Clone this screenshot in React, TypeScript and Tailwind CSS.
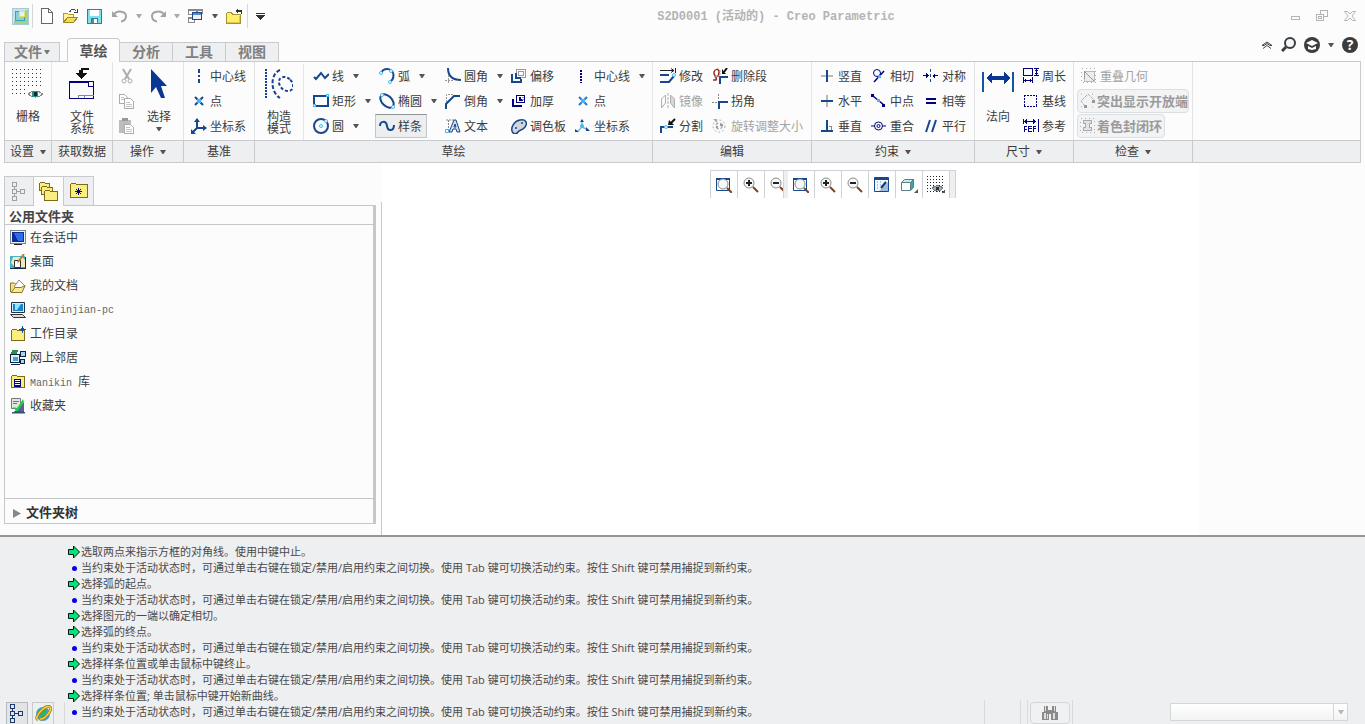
import type { ReactNode } from "react";

const BLUE = "#17478c";
const NAVY = "#000080";
const SKY = "#45b8ea";
const GREY = "#adadad";

type IconProps = { children: ReactNode; w?: number; h?: number; smooth?: boolean };

function Svg({ children, w = 16, h = 16, smooth = false }: IconProps) {
  return (
    <svg
      width={w}
      height={h}
      viewBox={`0 0 ${w} ${h}`}
      fill="none"
      className="shrink-0"
      aria-hidden="true"
      shapeRendering={smooth ? "auto" : "crispEdges"}
    >
      {children}
    </svg>
  );
}

function Caret({ color = "#555" }: { color?: string }) {
  return (
    <Svg w={6} h={4} smooth>
      <path d="M0 0h6L3.500 4h-1z" fill={color} />
    </Svg>
  );
}

/* ---------- quick access icons ---------- */

const AppIcon = () => (
  <Svg w={17} h={17}>
    <rect x="0.5" y="0.5" width="16" height="16" fill="#c9e3ee" stroke="#a9c9d8" />
    <path d="M2 13h14v3H2zM13 2h3v14h-3z" fill="#a4d08a" />
    <path d="M3 3h10v10H3z" fill="#3aa3b8" />
    <path d="M4 4h3v5h5v3H4z" fill="#8ed0d8" />
    <path d="M7 3h6v6H7z" fill="#dfe65c" />
    <path d="M8 4h4v4H8z" fill="#e4f4ee" />
  </Svg>
);

const NewIcon = () => (
  <Svg w={14} h={16}>
    <path d="M1.500 0.500h7l4 4v11h-11z" fill="#fff" stroke="#666" />
    <path d="M8.500 0.500v4h4" stroke="#666" />
  </Svg>
);

const OpenIcon = () => (
  <Svg w={17} h={16}>
    <path d="M1.500 13.500v-8h4l1 1h5v3" fill="#fff3a0" stroke="#b09a2c" />
    <path d="M1.500 14.500l4-5h10l-4 5z" fill="#f0dc5a" stroke="#a08a20" />
    <path d="M7.500 4.500c1-4 5-4 7-1M15.500 1v4M12 4.500h4" stroke="#444" />
  </Svg>
);

const SaveIcon = () => (
  <Svg w={15} h={15}>
    <rect x="0.5" y="0.5" width="14" height="14" fill="#7fe0ea" stroke="#2f7f96" />
    <rect x="3" y="1" width="9" height="6" fill="#fff" />
    <rect x="4.5" y="9.5" width="6" height="5" fill="#fff" stroke="#2f7f96" />
    <path d="M5 10h2v4H5z" fill="#5c8a94" />
  </Svg>
);

const UndoIcon = () => (
  <Svg w={16} h={14} smooth>
    <path d="M2 5.500C5 1 14 2 14 7c0 3-2 5-5 5.500" stroke="#a3a3a3" strokeWidth="2" />
    <path d="M0 2v6h6z" fill="#a3a3a3" />
  </Svg>
);

const RedoIcon = () => (
  <Svg w={16} h={14} smooth>
    <path d="M14 5.500C11 1 2 2 2 7c0 3 2 5 5 5.500" stroke="#a3a3a3" strokeWidth="2" />
    <path d="M16 2v6h-6z" fill="#a3a3a3" />
  </Svg>
);

const WindowsIcon = () => (
  <Svg w={16} h={15}>
    <path d="M0.500 0.500h8v5h-8zM0.500 8.500h6v5h-6zM9.500 0.500h5v4h-5z" stroke="#888" />
    <path d="M0 1h9v1H0zM0 9h6v1H0zM9 1h6v1H9z" fill="#888" />
    <rect x="4.500" y="3.500" width="9" height="7" fill="#eef3fc" stroke="#1d4795" />
    <path d="M5 4h8v2H5z" fill="#5d86cc" />
  </Svg>
);

const CloseFolderIcon = () => (
  <Svg w={17} h={17}>
    <path d="M0.500 15.500v-10l1-1h4l1 2h8v9z" fill="#fff06c" stroke="#a8922a" />
    <path d="M1 14h13v1H1zM13 8h1v7h-1z" fill="#e3c640" />
    <path d="M9 3l3-3v2h3l1 1v3h-1V4h-3v2z" fill="#333" />
  </Svg>
);

const CustomizeIcon = () => (
  <Svg w={9} h={7}>
    <path d="M0 0h9v1H0zM0 2h9v1H0zM1 3h7v1H1zM2 4h5v1H2zM3 5h3v1H3zM4 6h1v1H4z" fill="#333" />
  </Svg>
);

/* ---------- big ribbon icons ---------- */

const GridEyeIcon = () => {
  const dots: ReactNode[] = [];
  for (let y = 0; y < 7; y++)
    for (let x = 0; x < 8; x++)
      if (!(y > 4 && x > 3)) dots.push(<rect key={`${x}-${y}`} x={x * 4} y={y * 4 + 1} width="1" height="1" fill="#333" />);
  return (
    <Svg w={32} h={32}>
      {dots}
      <path d="M16 26c4-4 10-4 15 0c-4 4-11 4-15 0z" fill="#e8f2f2" stroke="#8a8a8a" />
      <circle cx="23" cy="26" r="3.500" fill="#2f8f8f" />
      <rect x="22" y="24" width="3" height="4" fill="#06302f" />
    </Svg>
  );
};

const FileSystemIcon = () => (
  <Svg w={26} h={33}>
    <path d="M12 1h8v2h-6v3h4l-6 6-6-6h4V3h2z" fill="#111" />
    <path d="M1 14h24v17H1z" fill="#fafafc" />
    <path d="M0.500 14.500h24v17h-24z" stroke={NAVY} />
    <path d="M1 15h19v1H1z" fill={NAVY} />
    <path d="M19.500 15v4h5" stroke={NAVY} />
    <path d="M9.500 31v-3h15M15.500 28v3" stroke="#888" />
  </Svg>
);

const PointerIcon = () => (
  <Svg w={18} h={30} smooth>
    <path d="M1 0v24l5-6 5 11h4l-4-12h6z" fill="#0a3794" />
  </Svg>
);

const ConstructionIcon = () => (
  <Svg w={28} h={32} smooth>
    <path d="M1 1v30" stroke="#1a3f96" strokeWidth="2" strokeDasharray="2 1" />
    <path d="M15 2C5 6 5 24 15 30" stroke="#1a3f96" strokeWidth="2" strokeDasharray="4 2" />
    <ellipse cx="21" cy="16" rx="6" ry="8" transform="rotate(-45 21 16)" stroke="#1a3f96" strokeWidth="2" strokeDasharray="3 2" />
  </Svg>
);

const NormalIcon = () => (
  <Svg w={32} h={28}>
    <path d="M0 2h2v20H0zM30 2h2v20h-2z" fill="#1454a4" />
    <path d="M4 8l6-6v4h12V2l6 6-6 6v-4H10v4z" fill="#0a3794" />
  </Svg>
);

/* ---------- small ribbon icons ---------- */

const CutIcon = () => (
  <Svg smooth>
    <path d="M4 1l6 10M12 1L6 11" stroke={GREY} strokeWidth="2" />
    <circle cx="5" cy="13" r="2" stroke={GREY} />
    <circle cx="11" cy="13" r="2" stroke={GREY} />
  </Svg>
);

const CopyIcon = () => (
  <Svg>
    <path d="M0.500 1.500h5l3 3v6h-8z" fill="#fff" stroke={GREY} />
    <path d="M5.500 5.500h6l3 3v7h-9z" fill="#fff" stroke={GREY} />
    <path d="M7 9.500h4M7 11.500h6M7 13.500h6M2 4.500h3M2 6.500h3" stroke="#c4c4c4" />
  </Svg>
);

const PasteIcon = () => (
  <Svg>
    <path d="M0 2h12v13H0z" fill="#bdbdbd" />
    <path d="M3 0h6v3H3z" fill="#999" />
    <path d="M5.500 6.500h6l3 3v6h-9z" fill="#fff" stroke={GREY} />
    <path d="M7 9.500h4M7 11.500h6M7 13.500h6" stroke="#c4c4c4" />
  </Svg>
);

const CenterlineIcon = () => (
  <Svg>
    <path d="M7 1h2v4H7zM7 7h2v2H7zM7 11h2v4H7z" fill={BLUE} />
  </Svg>
);

const DottedLineIcon = () => (
  <Svg>
    <path d="M5 2h2v2H5zM5 5h2v2H5zM5 8h2v2H5zM5 11h2v2H5zM5 14h2v1H5z" fill={NAVY} />
  </Svg>
);

const PointIcon = ({ color = BLUE }: { color?: string }) => (
  <Svg smooth>
    <path d="M4 4l8 8M12 4l-8 8" stroke={color} strokeWidth="2" />
    <rect x="6" y="6" width="4" height="4" fill={SKY} />
  </Svg>
);

const CsysIcon = () => (
  <Svg smooth>
    <path d="M6 10V1M6 10h9M6 10l-5 5" stroke={BLUE} strokeWidth="2" />
    <path d="M3 4l3-4 3 4zM12 7l4 3-4 3zM0 11v5h5z" fill={BLUE} />
  </Svg>
);

const SketchCsysIcon = () => (
  <Svg smooth>
    <path d="M7 9V2M7 9l6 3M7 9l-5 5" stroke="#7fb6e8" strokeWidth="1.500" />
    <path d="M5 4l2-3 2 3zM11 9l4 4h-4zM0 11l4 3H0z" fill={BLUE} />
    <circle cx="7" cy="8" r="2" fill={SKY} />
  </Svg>
);

const LineIcon = () => (
  <Svg smooth>
    <path d="M1 9l2 2 5-6 4 5 4-4" stroke={BLUE} strokeWidth="2" />
  </Svg>
);

const RectIcon = () => (
  <Svg>
    <rect x="1" y="3" width="14" height="10" stroke={BLUE} strokeWidth="2" />
    <path d="M13.500 1.500h2v2h-2zM0.500 11.500h2v2h-2z" fill="#fff" stroke={SKY} />
  </Svg>
);

const CircleIcon = () => (
  <Svg smooth>
    <circle cx="8" cy="8" r="7" stroke={BLUE} strokeWidth="2" />
    <circle cx="8" cy="8" r="1.500" stroke={SKY} />
    <circle cx="13" cy="3" r="1.500" fill="#fff" stroke={SKY} />
  </Svg>
);

const ArcIcon = () => (
  <Svg smooth>
    <path d="M2 5C5-1 14 0 14.500 7c0 4-2 6-4 7" stroke={BLUE} strokeWidth="2" />
    <circle cx="2" cy="5" r="1.500" fill="#fff" stroke={SKY} />
    <circle cx="12" cy="3" r="1.500" fill="#fff" stroke={SKY} />
    <circle cx="11" cy="14" r="1.500" fill="#fff" stroke={SKY} />
  </Svg>
);

const EllipseIcon = () => (
  <Svg smooth>
    <ellipse cx="8" cy="8" rx="8" ry="5" transform="rotate(45 8 8)" stroke={BLUE} strokeWidth="2" />
    <circle cx="3" cy="2" r="1.500" fill="#fff" stroke={SKY} />
    <circle cx="14" cy="14" r="1.500" fill="#fff" stroke={SKY} />
  </Svg>
);

const SplineIcon = () => (
  <Svg smooth>
    <path d="M1 8c0-5 6-6 7 0s7 5 7-1" stroke={BLUE} strokeWidth="2" />
  </Svg>
);

const FilletIcon = () => (
  <Svg smooth>
    <path d="M3 0c0 8 4 12 13 12" stroke={BLUE} strokeWidth="2" />
    <path d="M3.500 7v9M0 12.500h8" stroke="#999" strokeDasharray="2 1" />
  </Svg>
);

const ChamferIcon = () => (
  <Svg smooth>
    <path d="M1 16v-5l8-8h6" stroke={BLUE} strokeWidth="2" />
    <path d="M1.500 9V1.500H9" stroke="#999" strokeDasharray="2 1" />
  </Svg>
);

const TextIcon = () => (
  <Svg smooth>
    <path d="M1 2h8M3.500 2v10" stroke="#888" strokeDasharray="2 1" />
    <path d="M4 14l5-12h2l4 12h-3l-1-3H8l-1 3z" fill="#cfdcec" stroke={BLUE} />
    <path d="M9 9l1-3 1 3z" fill="#fff" stroke={BLUE} />
    <path d="M0.500 11.500h3v3h-3z" stroke={SKY} />
  </Svg>
);

const OffsetIcon = () => (
  <Svg>
    <path d="M5.500 1.500h9v8h-9z" stroke="#999" />
    <path d="M7.500 3.500h5v4h-5z" stroke="#999" />
    <path d="M1 6v8h9v-3" stroke={BLUE} strokeWidth="2" />
    <path d="M5 5v5h5" stroke={BLUE} strokeWidth="2" />
  </Svg>
);

const ThickenIcon = () => (
  <Svg>
    <path d="M5.500 2.500h8v7h-8z" stroke={NAVY} />
    <path d="M2 6v7h9" stroke={NAVY} strokeWidth="2" />
    <path d="M8 4h2v2h2v2H8z" fill={NAVY} />
    <path d="M11 4h2M11 6h2" stroke="#999" />
  </Svg>
);

const PaletteIcon = () => (
  <Svg smooth>
    <path d="M1 13c-1-4 2-10 8-11s8 3 5 7-5 2-7 5-5 2-6-1z" fill="#d3d6d8" stroke={BLUE} strokeWidth="1.500" />
    <circle cx="11" cy="5" r="1" fill={BLUE} />
    <circle cx="5" cy="10" r="1" fill={BLUE} />
  </Svg>
);

const ModifyIcon = () => (
  <Svg smooth>
    <path d="M0 2.500h14M11 0.500l3 2-3 2M15.500 0v5" stroke="#222" />
    <path d="M0 7h9M0 14h9l5-6" stroke={BLUE} strokeWidth="2" />
    <circle cx="14" cy="7" r="1.500" fill="#fff" stroke={SKY} />
  </Svg>
);

const MirrorIcon = () => (
  <Svg smooth>
    <path d="M1.500 6l4-4v8l-4 5z" stroke={GREY} />
    <path d="M14.500 6l-4-4v8l4 5z" fill="#d8d8d8" stroke={GREY} />
    <path d="M8 0v16" stroke={GREY} strokeDasharray="3 1" />
  </Svg>
);

const DivideIcon = () => (
  <Svg smooth>
    <path d="M1 15V9h12" stroke={BLUE} strokeWidth="2" />
    <path d="M15 1l-4 4" stroke="#111" strokeWidth="2" />
    <path d="M9 2l5 5H8z" fill="#111" />
    <circle cx="6" cy="9" r="1.500" fill="#fff" stroke={SKY} />
  </Svg>
);

const DeleteSegIcon = () => (
  <Svg smooth>
    <path d="M1 12h3c2-2-3-5-2-8 1-3 5-4 5 0 0 2-1 3-1 5" stroke="#9c2a20" strokeWidth="1.500" />
    <path d="M8 16V9h8" stroke={BLUE} strokeWidth="2" />
    <path d="M15 0l-3 4" stroke="#111" strokeWidth="2" />
    <path d="M10 1l4 5h-4z" fill="#111" />
    <path d="M8 2v6H3" stroke="#999" strokeDasharray="2 1" />
  </Svg>
);

const CornerIcon = () => (
  <Svg>
    <path d="M7 16V9h9" stroke={BLUE} strokeWidth="2" />
    <path d="M6 1h1v2H6zM6 4h1v2H6zM0 9h2v1H0zM3 9h2v1H3z" fill="#888" />
  </Svg>
);

const RotateIcon = () => (
  <Svg smooth>
    <circle cx="7" cy="8" r="6" stroke={GREY} strokeDasharray="2 2" />
    <circle cx="7" cy="8" r="3" stroke={GREY} strokeWidth="1.500" strokeDasharray="3 2" />
    <path d="M1 1h4v4z" fill={GREY} />
    <path d="M8 6h3v2H8zM4 8h2v2H4z" fill="#999" />
  </Svg>
);

const VerticalIcon = () => (
  <Svg>
    <path d="M2 7h12v2H2z" fill="#b8b8b8" />
    <path d="M7 2h2v12H7z" fill={BLUE} />
  </Svg>
);

const HorizontalIcon = () => (
  <Svg>
    <path d="M7 2h2v12H7z" fill="#b8b8b8" />
    <path d="M2 7h12v2H2z" fill={BLUE} />
  </Svg>
);

const PerpIcon = () => (
  <Svg>
    <path d="M7 2h2v10h5v2H2v-2h5z" fill={BLUE} />
    <path d="M9.500 8.500h3v3" stroke="#888" />
  </Svg>
);

const TangentIcon = () => (
  <Svg smooth>
    <circle cx="6" cy="5" r="3.500" stroke={NAVY} />
    <path d="M3 14L13 3" stroke={NAVY} strokeWidth="1.500" />
    <rect x="7" y="7" width="3" height="3" fill={SKY} />
  </Svg>
);

const MidpointIcon = () => (
  <Svg smooth>
    <path d="M2 3l11 9" stroke={NAVY} strokeWidth="1.500" />
    <path d="M0 1h3v3H0zM11 11h3v3h-3z" fill={NAVY} />
    <rect x="6" y="6" width="3" height="3" fill={SKY} />
  </Svg>
);

const CoincidentIcon = () => (
  <Svg smooth>
    <path d="M0 8h3M12 8h3" stroke={NAVY} />
    <circle cx="7.500" cy="8" r="4" stroke={NAVY} />
    <circle cx="7.500" cy="8" r="1.500" stroke={NAVY} />
  </Svg>
);

const SymmetricIcon = () => (
  <Svg>
    <path d="M7 1h1v3H7zM7 6h1v3H7zM7 11h1v3H7z" fill={BLUE} />
    <path d="M0 7h5v1H0zM10 7h5v1h-5z" fill={NAVY} />
    <path d="M3 5l3 3-3 2zM12 5L9 8l3 2z" fill={NAVY} />
  </Svg>
);

const EqualIcon = () => (
  <Svg>
    <path d="M3 5h10v2H3zM3 9h10v2H3z" fill={NAVY} />
  </Svg>
);

const ParallelIcon = () => (
  <Svg smooth>
    <path d="M3 14L7 2M9 14l4-12" stroke={BLUE} strokeWidth="2" />
  </Svg>
);

const PerimeterIcon = () => (
  <Svg>
    <rect x="0.500" y="0.500" width="9" height="7" stroke={NAVY} />
    <path d="M0 9h1v6H0zM9 9h1v6H9zM1 12h8v1H1zM2 11h1v3H2zM7 11h1v3H7zM11 0h5v1h-5zM11 7h5v1h-5zM13 1h1v6h-1zM12 2h3v1h-3zM12 5h3v1h-3z" fill={NAVY} />
  </Svg>
);

const BaselineIcon = () => (
  <Svg>
    <path d="M1 2h13M1 13.500h13" stroke={NAVY} strokeDasharray="2 1" />
    <path d="M1.500 2v11M13.500 2v11" stroke={NAVY} strokeDasharray="2 1" />
  </Svg>
);

const ReferenceIcon = () => (
  <Svg>
    <path d="M1 3h12v1H1zM3 1h1v5H3zM2 2h1v3H2zM10 1h1v5h-1zM11 2h1v3h-1zM15 1h1v13h-1zM0 1h1v5H0z" fill={NAVY} />
    <path d="M1 8h3v1H2v2h2v1H2v2H1zM5 8h4v1H6v1h3v1H6v2h3v1H5zM10 8h3v1h-2v1h2v1h-2v3h-1z" fill={NAVY} />
  </Svg>
);

const OverlapIcon = () => (
  <Svg>
    <path d="M0.500 0.500h14v14h-14z" stroke={GREY} strokeDasharray="1 3" />
    <path d="M3.500 3.500h10v10h-10z" fill="#ececec" stroke="#bbb" />
    <path d="M3 3l10 10M3 3v8" stroke="#999" />
  </Svg>
);

const OpenEndsIcon = () => (
  <Svg smooth>
    <path d="M5 13L1 8l7-7 6 6" stroke="#aaa" strokeDasharray="3 1" />
    <path d="M12 7h3v3h-3zM4 12h3v3H4z" fill="#999" />
    <path d="M1 1h1M12 1h1M1 14h1M12 14h1" stroke={GREY} />
  </Svg>
);

const ShadeLoopsIcon = () => (
  <Svg>
    <path d="M0.500 0.500h14v14h-14z" stroke={GREY} strokeDasharray="1 3" />
    <path d="M3.500 2.500h8v3h-2v4h2v3h-8v-3h2v-4h-2z" fill="#e2e2e2" stroke="#aaa" />
  </Svg>
);

/* ---------- canvas toolbar ---------- */

const Lens = ({ x = 7, y = 7, sign }: { x?: number; y?: number; sign?: "plus" | "minus" }) => (
  <>
    <path d={`M${x + 4} ${y + 4}l5 5`} stroke="#7a4326" strokeWidth="2" />
    <circle cx={x} cy={y} r="5" fill="#f6f8f9" stroke="#8a8a8a" />
    {sign && <path d={`M${x - 3} ${y}h6`} stroke="#222" strokeWidth="2" />}
    {sign === "plus" && <path d={`M${x} ${y - 3}v6`} stroke="#222" strokeWidth="2" />}
  </>
);

const RefitIcon = () => (
  <Svg w={17} smooth>
    <path d="M1.500 1.500h13v12h-13z" fill="#fff" stroke={BLUE} />
    <path d="M1 1h14v2H1z" fill={BLUE} />
    <Lens x={8} y={7} />
  </Svg>
);
const ZoomInIcon = () => (
  <Svg w={17} h={17} smooth>
    <Lens sign="plus" />
  </Svg>
);
const ZoomOutIcon = () => (
  <Svg w={17} h={17} smooth>
    <Lens sign="minus" />
  </Svg>
);
const RepaintIcon = () => (
  <Svg w={15} h={15} smooth>
    <path d="M0.500 0.500h14v14h-14z" fill="#eff6fd" stroke={BLUE} />
    <path d="M1 1h13v2H1z" fill={BLUE} />
    <path d="M14 5v9H5z" fill="#9dbce0" />
    <path d="M12 5l-5 6" stroke="#16335f" strokeWidth="2" />
    <path d="M3 5h1M6 5h1M3 8h1M3 11h1M6 8h1" stroke="#6d8fbc" />
  </Svg>
);
const BoxIcon = () => (
  <Svg w={18} smooth>
    <path d="M1.500 5.500l3-3h9l-3 3z" fill="#b9efec" stroke="#5a7f86" />
    <path d="M10.500 5.500l3-3v8l-3 3z" fill="#3fa4a4" stroke="#5a7f86" />
    <path d="M1.500 5.500h9v8h-9z" fill="#fff" stroke="#5a7f86" />
    <path d="M18 12v4h-4z" fill="#555" />
  </Svg>
);
const DisplayFilterIcon = () => (
  <Svg w={18} h={17}>
    {[0, 3, 6, 9, 12, 15].map((y) => (
      <path key={y} d={`M0 ${y + 0.5}h16`} stroke="#222" strokeDasharray="1 2" />
    ))}
    <path d="M5 12c3-3 8-3 11 0-3 4-8 4-11 0z" fill="#9db2bd" stroke="#777" />
    <rect x="9" y="11" width="3" height="3" fill="#234" />
    <path d="M18 13v4h-4z" fill="#555" />
  </Svg>
);

/* ---------- navigator icons ---------- */

const TreeIcon = ({ color = "#a0a0a0" }: { color?: string }) => (
  <Svg w={14} h={19}>
    <path d="M0.500 0.500h4v4h-4zM0.500 7.500h4v4h-4zM0.500 14.500h4v4h-4zM8.500 7.500h4v4h-4zM2.500 5v2M2.500 12v2M5 9.500h3" stroke={color} />
  </Svg>
);

const Folder = ({ x = 0, y = 0, w = 12, h = 9 }: { x?: number; y?: number; w?: number; h?: number }) => (
  <path d={`M${x + 0.5} ${y + h + 0.5}v-${h - 1}l1-1h4l1 1h${w - 6}v${h - 1}z`} fill="#fbee80" stroke="#7d6b16" />
);

const FoldersIcon = () => (
  <Svg w={20} h={20}>
    <Folder w={10} h={8} />
    <Folder x={2} y={4} w={11} h={8} />
    <Folder x={5} y={8} w={13} h={10} />
  </Svg>
);

const FavFolderIcon = () => (
  <Svg w={18} h={16}>
    <Folder w={17} h={14} />
    <path d="M8 5h1v7H8zM5 8h7v1H5zM6 6h1v1H6zM10 6h1v1h-1zM6 10h1v1H6zM10 10h1v1h-1zM7 7h3v3H7z" fill={NAVY} />
  </Svg>
);

const SessionIcon = () => (
  <Svg>
    <rect x="0.500" y="0.500" width="15" height="13" fill="#eef1f5" stroke="#7a8290" />
    <path d="M2 2h12v10H2z" fill="#0c2c9c" />
    <path d="M4 3h9v8H8z" fill="#2a6ee8" />
    <path d="M4 14h8v1H4z" fill="#223" />
  </Svg>
);
const DesktopIcon = () => (
  <Svg smooth>
    <path d="M0 2h15v12H0z" fill="#3fb4cc" />
    <path d="M3 3h9l3 3v7H5l-4-4z" fill="#efe9bc" />
    <path d="M4.500 6.500h6v7h-6z" fill="#fff" stroke="#333" />
    <path d="M14 0L8 8" stroke="#c07a2a" strokeWidth="2" />
    <path d="M8 8l1-1-2 3z" fill="#111" />
    <path d="M0 14h16v1H0zM15 3h1v11h-1z" fill="#1a2a44" />
  </Svg>
);
const DocsIcon = () => (
  <Svg smooth>
    <path d="M0.500 14V5h4l1 1h3" fill="#f6e27a" stroke="#8a7725" />
    <path d="M4 9l5-7 6 6-3 5z" fill="#fff" stroke="#888" />
    <path d="M1 14.500l4-5h6l4-2-3 7z" fill="#f8ea94" stroke="#8a7725" />
  </Svg>
);
const PcIcon = () => (
  <Svg smooth>
    <path d="M1.500 0.500h13v10h-13z" fill="#dbe8ee" stroke="#234" />
    <path d="M3 2h10v7H3z" fill="#1b84cc" />
    <path d="M5 2h6l-4 6H5z" fill="#8fe4ff" />
    <path d="M0.500 12.500h12l3 3h-12z" fill="#ddd" stroke="#333" />
  </Svg>
);
const WorkDirIcon = () => (
  <Svg>
    <Folder x={1} y={3} w={13} h={11} />
    <path d="M12 0h1v7h-1zM9 3h7v1H9zM11 2h3v3h-3z" fill="#1450b0" />
  </Svg>
);
const NetworkIcon = () => (
  <Svg>
    <path d="M0.500 4.500h9v8h-9z" fill="#e6eef2" stroke="#124" />
    <path d="M3 7h5v4H3z" fill="#35a8e0" />
    <path d="M10.500 1.500h5v5h-5zM10.500 9.500h4v4h-4z" fill="#a9d4f0" stroke="#124" />
    <path d="M2 0h6v2H7v2H1V2h1z" fill="#249048" />
    <path d="M1 14h9v1H1z" fill="#124" />
  </Svg>
);
const ManikinIcon = () => (
  <Svg>
    <Folder x={1} y={1} w={13} h={12} />
    <path d="M4 5h7v8H4z" fill={NAVY} />
    <path d="M5 6h5v1H5zM5 8h5v1H5zM5 10h5v1H5z" fill="#fff" />
  </Svg>
);
const FavoritesIcon = () => (
  <Svg smooth>
    <path d="M1.500 0.500h9v10h-9z" fill="#e4e4e4" stroke="#777" />
    <path d="M3 3.500h6M3 5.500h4" stroke="#777" />
    <path d="M14 4v10H4z" fill="#5c5c98" />
    <path d="M3 9l4 1 6-9 1 3-7 10z" fill="#20d048" />
    <path d="M2 15l3-1h9l1 1z" fill="#246" stroke="#357" />
  </Svg>
);

const GreenArrow = () => (
  <Svg w={12} h={14} smooth>
    <path d="M0.500 4.500h5V1l6 6-6 6V9.500h-5z" fill="#00e676" stroke="#111" />
  </Svg>
);

const BrowserIcon = () => (
  <Svg w={17} h={17} smooth>
    <circle cx="8" cy="9" r="7" fill="#35a6d6" />
    <path d="M3 6c3-4 8-2 9 0l-3 3 2 4-4 2-1-4-4-1z" fill="#3cae58" />
    <path d="M3 15C-2 12 11-1 15 2c3 3-6 13-10 12" stroke="#a07a18" strokeWidth="3" />
    <path d="M3 15C-2 12 11-1 15 2c3 3-6 13-10 12" stroke="#f2d43c" strokeWidth="1.500" />
  </Svg>
);

const BinocularsIcon = () => (
  <Svg w={16}>
    <path d="M2 1h4v4h1v10H0V7h2zM10 1h4v6h2v8H9V5h1zM7 5h2v4H7z" fill="#8a8a8a" />
    <path d="M2 8h2v6H2zM11 8h2v6h-2zM3 1h1v5H3zM12 1h1v5h-1zM5 9h1v5H5z" fill="#dedede" />
  </Svg>
);

/* ---------- ribbon building blocks ---------- */

type ToolProps = {
  icon: ReactNode;
  label: string;
  caret?: boolean;
  active?: boolean;
  disabled?: boolean;
};

function Tool({ icon, label, caret, active, disabled }: ToolProps) {
  return (
    <button
      disabled={disabled}
      className={
        "flex h-6 items-center gap-[3px] whitespace-nowrap border pl-[3px] text-xs " +
        (active ? "border-[#c4c7ca] border-t-[#8f9294] bg-[#eceef0] pr-1 " : "border-transparent ") +
        (disabled ? "text-[#a3a3a3]" : "text-[#3c3c3c]")
      }
    >
      {icon}
      <span className="pt-0.5">{label}</span>
      {caret && (
        <span className="ml-1.5">
          <Caret />
        </span>
      )}
    </button>
  );
}

function CheckTool({ icon, label, wide }: { icon: ReactNode; label: string; wide?: boolean }) {
  return (
    <button
      disabled
      className={
        "flex h-6 items-center gap-px whitespace-nowrap rounded-sm border border-[#dcdfe1] bg-[#f2f3f4] pl-0.5 text-[13px] font-bold text-[#9a9a9a] " +
        (wide ? "w-28" : "w-[88px]")
      }
    >
      {icon}
      <span className="pt-0.5">{label}</span>
    </button>
  );
}

function Column({ className, children }: { className?: string; children: ReactNode }) {
  return <div className={"flex shrink-0 flex-col items-start gap-px " + (className ?? "")}>{children}</div>;
}

function Group({ label, caret, className, children }: { label: string; caret?: boolean; className: string; children?: ReactNode }) {
  return (
    <section className={"flex flex-col " + className}>
      <div className="flex h-[78px] border-r border-[#e2e4e6] pt-0.5">{children}</div>
      <div className="flex h-[22px] items-center justify-center gap-1.5 border-r border-t border-[#c8cacd] bg-[#eeeff1] text-xs text-[#3c3c3c]">
        {label}
        {caret && <Caret />}
      </div>
    </section>
  );
}

function BigTool({ icon, label, caret, className }: { icon: ReactNode; label: string; caret?: boolean; className: string }) {
  return (
    <button className={"flex shrink-0 flex-col items-center text-xs leading-3 text-[#3c3c3c] " + className}>
      <span className="flex h-[47px] items-center pb-2">{icon}</span>
      <span className="w-6 break-all">{label}</span>
      {caret && (
        <span className="mt-1">
          <Caret />
        </span>
      )}
    </button>
  );
}

function Tab({ label }: { label: string }) {
  return (
    <button className="h-[19px] w-[53px] border-r border-t border-[#c8cacd] bg-[#eeeff1] text-sm leading-4 font-bold text-[#808080]">{label}</button>
  );
}

/* ---------- page sections ---------- */

function TitleBar() {
  return (
    <header className="flex h-8 items-center text-[#b4b4b4]">
      <div className="flex flex-1 items-center">
        <div className="flex h-6 w-[33px] items-center border-r border-[#d4d6d8] pl-3">
          <AppIcon />
        </div>
        <button aria-label="新建" className="ml-[7px]"><NewIcon /></button>
        <button aria-label="打开" className="ml-2"><OpenIcon /></button>
        <button aria-label="保存" className="ml-2"><SaveIcon /></button>
        <button aria-label="撤消" className="ml-2.5 flex items-center gap-2"><UndoIcon /><Caret color="#aaa" /></button>
        <button aria-label="重做" className="ml-2 flex items-center gap-2"><RedoIcon /><Caret color="#aaa" /></button>
        <button aria-label="窗口" className="ml-2 flex items-center gap-2"><WindowsIcon /><Caret /></button>
        <button aria-label="关闭" className="ml-2 flex h-6 items-center border-r border-[#d4d6d8] pr-1"><CloseFolderIcon /></button>
        <button aria-label="自定义" className="ml-2"><CustomizeIcon /></button>
      </div>
      <h1 className="ml-[196px] whitespace-nowrap pt-0.5 font-['Liberation_Mono','Noto_Sans_CJK_SC',monospace] text-xs font-bold">
        S2D0001 (活动的) - Creo Parametric
      </h1>
      <div className="flex flex-1 items-center justify-end gap-[15px] pr-[9px]">
        <button aria-label="最小化" className="pt-1">
          <Svg w={10} h={5}><path d="M0.500 0.500h8v3h-8z" stroke="#b4b4b4" /></Svg>
        </button>
        <button aria-label="还原">
          <Svg w={13} h={12}>
            <path d="M4.500 0.500h7v6h-7z" stroke="#b4b4b4" />
            <path d="M0.500 4.500h7v6h-7z" fill="#fcfcfc" stroke="#b4b4b4" />
            <path d="M2.500 6.500h3v2h-3z" stroke="#b4b4b4" />
          </Svg>
        </button>
        <button aria-label="关闭窗口">
          <Svg w={12} h={10} smooth><path d="M0.500 0.500h3L6 3l2.500-2.500h3L8 5l3.500 4.500h-3L6 7 3.500 9.500h-3L4 5z" stroke="#b4b4b4" /></Svg>
        </button>
      </div>
    </header>
  );
}

function TabBar() {
  return (
    <nav className="mx-1 flex h-[29px] items-end">
      <button className="flex h-[19px] w-14 items-center justify-center gap-0.5 border border-b-0 border-[#c8cacd] bg-[#eeeff1] text-sm font-bold text-[#808080]">
        文件 <Caret color="#777" />
      </button>
      <button className="relative ml-[7px] -mb-px h-6 w-[53px] rounded-t-sm border border-b-0 border-[#c8cacd] bg-[#fcfcfc] text-sm font-bold text-[#555]">
        草绘
      </button>
      <Tab label="分析" />
      <Tab label="工具" />
      <Tab label="视图" />
      <div className="flex flex-1 items-center justify-end gap-2 self-stretch pb-1 pr-[3px]">
        <button aria-label="折叠">
          <Svg w={12} h={8} smooth><path d="M1 4.500L6 1l5 3.500H9L6 2.500 3 4.500zM2 7.500L6 4.500l4 3" stroke="#444" /></Svg>
        </button>
        <button aria-label="搜索">
          <Svg w={15} h={15} smooth><circle cx="9" cy="6" r="5" fill="#f2f8fb" stroke="#3c3c3c" strokeWidth="2" /><path d="M5 10l-4 4" stroke="#3c3c3c" strokeWidth="3" /></Svg>
        </button>
        <button aria-label="学习" className="flex items-center gap-2">
          <Svg w={16} h={16} smooth>
            <circle cx="8" cy="8" r="8" fill="#3c3c3c" />
            <path d="M2 6l6-3 6 3-6 3zM4 9l4 2 4-2v3l-4 1-4-1z" fill="#fff" />
          </Svg>
          <Caret />
        </button>
        <button aria-label="帮助" className="flex h-4 w-4 items-center justify-center rounded-full bg-[#3c3c3c] text-sm leading-4 font-bold text-white">?</button>
      </div>
    </nav>
  );
}

function Ribbon() {
  return (
    <div className="mx-1 flex border border-[#c8cacd]">
      <Group label="设置" caret className="w-[47px]">
        <BigTool className="w-full" icon={<GridEyeIcon />} label="栅格" />
      </Group>
      <Group label="获取数据" className="w-[61px]">
        <BigTool className="w-full" icon={<FileSystemIcon />} label="文件系统" />
      </Group>
      <Group label="操作" caret className="w-[71px]">
        <Column className="w-7 pl-0.5">
          <Tool icon={<CutIcon />} label="" disabled />
          <Tool icon={<CopyIcon />} label="" disabled />
          <Tool icon={<PasteIcon />} label="" disabled />
        </Column>
        <BigTool className="w-9" icon={<PointerIcon />} label="选择" caret />
      </Group>
      <Group label="基准" className="w-[71px]">
        <Column className="pl-[3px]">
          <Tool icon={<CenterlineIcon />} label="中心线" />
          <Tool icon={<PointIcon />} label="点" />
          <Tool icon={<CsysIcon />} label="坐标系" />
        </Column>
      </Group>
      <Group label="草绘" className="w-[398px]">
        <BigTool className="w-12" icon={<ConstructionIcon />} label="构造模式" />
        <Column className="w-[72px] border-l border-[#e4e6e8] pl-[5px]">
          <Tool icon={<LineIcon />} label="线" caret />
          <Tool icon={<RectIcon />} label="矩形" caret />
          <Tool icon={<CircleIcon />} label="圆" caret />
        </Column>
        <Column className="w-[66px]">
          <Tool icon={<ArcIcon />} label="弧" caret />
          <Tool icon={<EllipseIcon />} label="椭圆" caret />
          <Tool icon={<SplineIcon />} label="样条" active />
        </Column>
        <Column className="w-[66px]">
          <Tool icon={<FilletIcon />} label="圆角" caret />
          <Tool icon={<ChamferIcon />} label="倒角" caret />
          <Tool icon={<TextIcon />} label="文本" />
        </Column>
        <Column className="w-16">
          <Tool icon={<OffsetIcon />} label="偏移" />
          <Tool icon={<ThickenIcon />} label="加厚" />
          <Tool icon={<PaletteIcon />} label="调色板" />
        </Column>
        <Column>
          <Tool icon={<DottedLineIcon />} label="中心线" caret />
          <Tool icon={<PointIcon color="#2a78cc" />} label="点" />
          <Tool icon={<SketchCsysIcon />} label="坐标系" />
        </Column>
      </Group>
      <Group label="编辑" className="w-[159px]">
        <Column className="w-[55px] pl-[3px]">
          <Tool icon={<ModifyIcon />} label="修改" />
          <Tool icon={<MirrorIcon />} label="镜像" disabled />
          <Tool icon={<DivideIcon />} label="分割" />
        </Column>
        <Column>
          <Tool icon={<DeleteSegIcon />} label="删除段" />
          <Tool icon={<CornerIcon />} label="拐角" />
          <Tool icon={<RotateIcon />} label="旋转调整大小" disabled />
        </Column>
      </Group>
      <Group label="约束" caret className="w-[163px]">
        <Column className="w-[55px] pl-[3px]">
          <Tool icon={<VerticalIcon />} label="竖直" />
          <Tool icon={<HorizontalIcon />} label="水平" />
          <Tool icon={<PerpIcon />} label="垂直" />
        </Column>
        <Column className="w-[52px]">
          <Tool icon={<TangentIcon />} label="相切" />
          <Tool icon={<MidpointIcon />} label="中点" />
          <Tool icon={<CoincidentIcon />} label="重合" />
        </Column>
        <Column>
          <Tool icon={<SymmetricIcon />} label="对称" />
          <Tool icon={<EqualIcon />} label="相等" />
          <Tool icon={<ParallelIcon />} label="平行" />
        </Column>
      </Group>
      <Group label="尺寸" caret className="w-[99px]">
        <BigTool className="w-11 pl-0.5" icon={<NormalIcon />} label="法向" />
        <Column>
          <Tool icon={<PerimeterIcon />} label="周长" />
          <Tool icon={<BaselineIcon />} label="基线" />
          <Tool icon={<ReferenceIcon />} label="参考" />
        </Column>
      </Group>
      <Group label="检查" caret className="w-[119px]">
        <Column className="pl-[3px]">
          <Tool icon={<OverlapIcon />} label="重叠几何" disabled />
          <CheckTool icon={<OpenEndsIcon />} label="突出显示开放端" wide />
          <CheckTool icon={<ShadeLoopsIcon />} label="着色封闭环" />
        </Column>
      </Group>
      <div className="flex flex-1 flex-col">
        <div className="h-[78px]" />
        <div className="h-[22px] border-t border-[#c8cacd] bg-[#eeeff1]" />
      </div>
    </div>
  );
}

const places = [
  { label: "在会话中", icon: <SessionIcon /> },
  { label: "桌面", icon: <DesktopIcon /> },
  { label: "我的文档", icon: <DocsIcon /> },
  { label: "zhaojinjian-pc", icon: <PcIcon />, mono: true },
  { label: "工作目录", icon: <WorkDirIcon /> },
  { label: "网上邻居", icon: <NetworkIcon /> },
  { label: "Manikin 库", icon: <ManikinIcon />, mono: true },
  { label: "收藏夹", icon: <FavoritesIcon /> },
];

function Navigator() {
  return (
    <aside className="flex w-[382px] shrink-0 flex-col pb-[11px] pl-1 pr-[6px] pt-[13px]">
      <div className="flex h-[29px]">
        <button aria-label="模型树" className="flex w-[30px] items-center justify-center border border-b-0 border-[#c8cacd] bg-[#eeeff1]">
          <TreeIcon />
        </button>
        <button aria-label="文件夹浏览器" className="relative -mb-px flex w-[29px] items-center justify-center border-t border-[#c8cacd] bg-[#fcfcfc]">
          <FoldersIcon />
        </button>
        <button aria-label="收藏夹" className="flex w-[31px] items-center justify-center border border-b-0 border-[#c8cacd] bg-[#eeeff1]">
          <FavFolderIcon />
        </button>
      </div>
      <div className="flex flex-1 flex-col border border-r-[3px] border-[#c5c8cb]">
        <h2 className="h-[19px] border-b border-[#c5c8cb] pl-1 text-[13px] leading-5 font-bold text-[#444]">公用文件夹</h2>
        <ul className="flex-1 pt-px">
          {places.map((p) => (
            <li key={p.label}>
              <a href="#" className="flex h-6 items-center gap-1 pl-[5px] text-xs text-[#3c3c3c]">
                {p.icon}
                {p.mono ? (
                  <span className="pt-0.5 font-['Liberation_Mono','Noto_Sans_CJK_SC',monospace] text-[10px] text-[#666]">
                    {p.label.replace("库", "")}
                    {p.label.includes("库") && <span className="text-xs text-[#3c3c3c]">库</span>}
                  </span>
                ) : (
                  <span>{p.label}</span>
                )}
              </a>
            </li>
          ))}
        </ul>
        <button className="flex h-[25px] items-center gap-[5px] border-t border-[#c5c8cb] pl-2 pt-1 text-[13px] font-bold text-[#333]">
          <Svg w={8} h={9} smooth><path d="M0 0l8 4.500L0 9z" fill="#888" /></Svg>
          文件夹树
        </button>
      </div>
    </aside>
  );
}

const cell = "flex h-[27px] w-[27px] shrink-0 items-center justify-center border-r border-[#d0d2d5] bg-white";

function Canvas() {
  return (
    <main className="flex min-w-0 flex-1">
      {/* divider starts below the navigator's tabs */}
      <div className="mt-[39px] -ml-px w-px bg-[#c8cacd]" />
      <div className="flex flex-1 items-start justify-center bg-white pl-[84px] pt-[7px]">
        <div className="flex w-[73px] overflow-hidden border-l border-t border-[#d0d2d5]">
          <button aria-label="重新调整" className={cell}><RefitIcon /></button>
          <button aria-label="放大" className={cell}><ZoomInIcon /></button>
          <button aria-label="缩小" className={cell}><ZoomOutIcon /></button>
        </div>
        <div className="flex border border-b-0 border-[#d0d2d5] bg-[#eeeff1] pl-1 pr-[5px]">
          <button aria-label="重新调整" className={cell}><RefitIcon /></button>
          <button aria-label="放大" className={cell}><ZoomInIcon /></button>
          <button aria-label="缩小" className={cell}><ZoomOutIcon /></button>
          <button aria-label="重画" className={cell}><RepaintIcon /></button>
          <button aria-label="显示样式" className={cell}><BoxIcon /></button>
          <button aria-label="显示过滤器" className={cell}><DisplayFilterIcon /></button>
        </div>
      </div>
      <div className="w-[166px]" />
    </main>
  );
}

const hint = "当约束处于活动状态时，可通过单击右键在锁定/禁用/启用约束之间切换。使用 Tab 键可切换活动约束。按住 Shift 键可禁用捕捉到新约束。";

const messages: { prompt: boolean; text: string }[] = [
  { prompt: true, text: "选取两点来指示方框的对角线。使用中键中止。" },
  { prompt: false, text: hint },
  { prompt: true, text: "选择弧的起点。" },
  { prompt: false, text: hint },
  { prompt: true, text: "选择图元的一端以确定相切。" },
  { prompt: true, text: "选择弧的终点。" },
  { prompt: false, text: hint },
  { prompt: true, text: "选择样条位置或单击鼠标中键终止。" },
  { prompt: false, text: hint },
  { prompt: true, text: "选择样条位置; 单击鼠标中键开始新曲线。" },
  { prompt: false, text: hint },
];

function StatusBar() {
  return (
    <footer className="flex items-end border-t-2 border-[#969696] bg-[#eeeff1]">
      <div className="flex h-[22px] w-[65px] gap-1 border-r border-[#d8dadc] pl-1.5">
        <button aria-label="导航器" className="flex w-[22px] items-center justify-center border border-b-0 border-[#b8babc] bg-[#e2e4e6]">
          <TreeIcon color="#1c3a70" />
        </button>
        <button aria-label="浏览器" className="flex w-[22px] items-center justify-center border border-b-0 border-[#c8cacd]">
          <BrowserIcon />
        </button>
      </div>
      <ul className="flex-1 self-start whitespace-nowrap pb-1 pl-[3px] pt-[7px] text-[11px] leading-4 text-[#4a4a4a]">
        {messages.map((m, i) => (
          <li key={i} className="flex items-center gap-px">
            <span className="flex w-3 justify-center">
              {m.prompt ? <GreenArrow /> : <span className="h-[5px] w-[5px] rounded-full bg-[#0000e0]" />}
            </span>
            <span>{m.text}</span>
          </li>
        ))}
      </ul>
      <div className="flex h-6 w-[381px] shrink-0 items-end">
        <div className="h-full w-[37px] border-l border-r border-[#d8dadc]" />
        <div className="ml-1.5 flex h-full w-[46px] items-end border-l border-r border-[#d8dadc] pl-0.5">
          <button aria-label="查找" className="flex h-[22px] w-10 items-center justify-center rounded-sm border border-[#d4d6d8] bg-[#f0f1f2]">
            <BinocularsIcon />
          </button>
        </div>
        <div className="relative mb-[3px] ml-[97px] h-[18px] w-[178px]">
          <select aria-label="选择过滤器" className="h-full w-full appearance-none border border-[#d4d6d8] bg-linear-to-b from-white to-[#f2f3f4]" />
          <span className="pointer-events-none absolute inset-y-0 right-0 flex w-[15px] items-center justify-center border-l border-[#d4d6d8]">
            <Caret color="#b4b6b8" />
          </span>
        </div>
      </div>
    </footer>
  );
}

export default function App() {
  return (
    <div className="flex min-h-screen flex-col bg-[#fcfcfc] font-['Open_Sans','Noto_Sans_CJK_SC',sans-serif]">
      <TitleBar />
      <TabBar />
      <Ribbon />
      <div className="flex flex-1">
        <Navigator />
        <Canvas />
      </div>
      <StatusBar />
    </div>
  );
}
